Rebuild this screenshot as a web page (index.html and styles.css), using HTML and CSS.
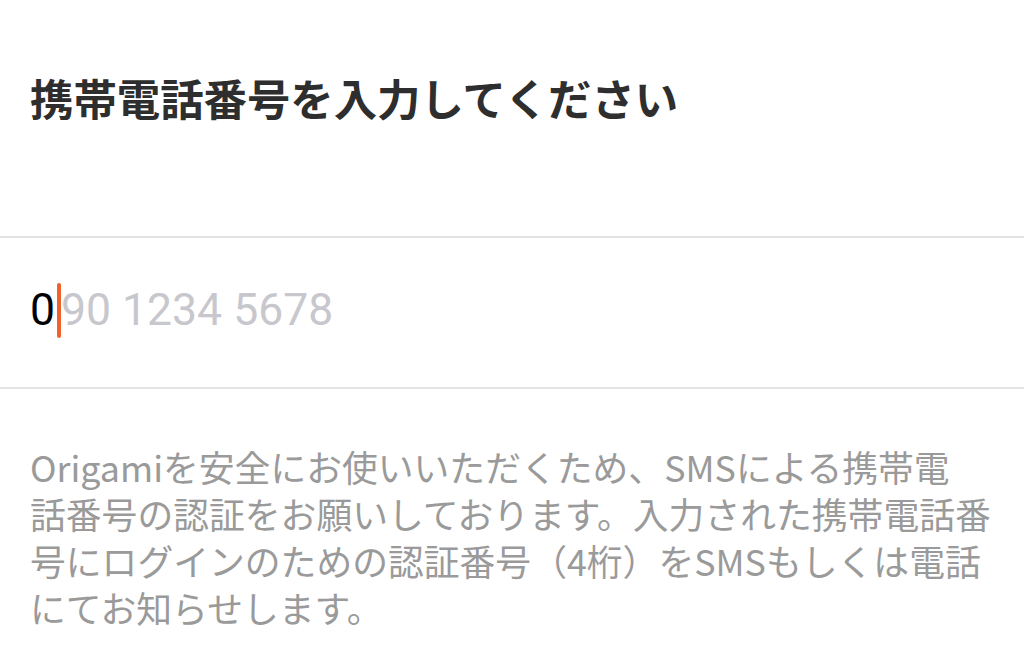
FILE: index.html
```html
<!DOCTYPE html>
<html lang="ja">
<head>
<meta charset="utf-8">
<title>携帯電話番号を入力してください</title>
<link rel="stylesheet" href="styles.css">
</head>
<body>
<div class="screen">
  <header class="header">
    <h1 class="title">携帯電話番号を入力してください</h1>
  </header>
  <div class="divider"></div>
  <div class="input-row">
    <span class="typed">0</span><span class="caret"></span><span class="placeholder">90 1234 5678</span>
  </div>
  <div class="divider"></div>
  <p class="note">Origamiを安全にお使いいただくため、SMSによる携帯電<br>話番号の認証をお願いしております。入力された携帯電話番<br>号にログインのための認証番号（4桁）をSMSもしくは電話<br>にてお知らせします。</p>
</div>
</body>
</html>
```
FILE: styles.css
```css
html, body {
  margin: 0;
  padding: 0;
  background: #ffffff;
}
.screen {
  width: 1024px;
  height: 668px;
  overflow: hidden;
  font-family: "Noto Sans CJK JP", "Noto Sans", sans-serif;
}
.header {
  box-sizing: border-box;
  height: 236px;
  padding: 67px 30px 0;
}
.title {
  margin: 0;
  font-size: 43.4px;
  line-height: 60px;
  font-weight: 700;
  color: #2e2e2e;
  white-space: nowrap;
}
.divider {
  height: 2px;
  background: #e3e3e3;
}
.input-row {
  box-sizing: border-box;
  height: 149px;
  padding: 0 30px 5px;
  display: flex;
  align-items: center;
  font-family: Roboto, "Liberation Sans", sans-serif;
  font-size: 44.5px;
  line-height: 56px;
}
.typed {
  color: #000000;
}
.caret {
  display: inline-block;
  width: 4px;
  height: 55px;
  margin: 0 0 0 2px;
  background: #f0622a;
  border-radius: 2px;
}
.placeholder {
  color: #c7c7cd;
}
.note {
  margin: 0;
  padding: 54px 30px 0;
  font-size: 35.8px;
  line-height: 47px;
  color: #9a9a9a;
  white-space: nowrap;
}
```
